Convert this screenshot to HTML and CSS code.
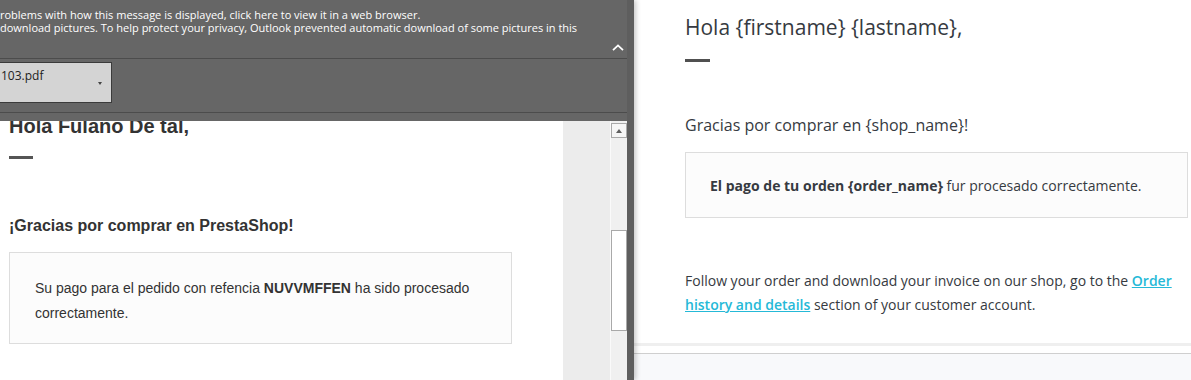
FILE: index.html
```html
<!DOCTYPE html>
<html lang="es">
<head>
    <meta charset="UTF-8">
    <meta name="viewport" content="width=device-width, initial-scale=1.0">
    <title>Email preview</title>
    <link rel="stylesheet" href="styles.css">
</head>

<body>
    <div class="outlook">
        <div class="infobar">
            <p>roblems with how this message is displayed, click here to view it in a web browser.</p>
            <p>download pictures. To help protect your privacy, Outlook prevented automatic download of some pictures in this</p>
            <div class="collapse">
                <svg width="12" height="7" viewBox="0 0 12 7">
                    <polyline points="1,6.2 6,1.4 11,6.2" fill="none" stroke="#fff" stroke-width="1.8" />
                </svg>
            </div>
        </div>

        <div class="attachments">
            <div class="attachment">
                <span>103.pdf</span>
                <span class="caret"></span>
            </div>
        </div>

        <div class="reading">
            <div class="email">
                <h1>Hola Fulano De tal,</h1>
                <div class="dash"></div>
                <h2>¡Gracias por comprar en PrestaShop!</h2>
                <div class="box">
                    Su pago para el pedido con refencia <b>NUVVMFFEN</b> ha sido procesado correctamente.
                </div>
            </div>
            <div class="gutter"></div>
            <div class="scrollbar">
                <div class="scroll-up"><span></span></div>
                <div class="thumb"></div>
            </div>
        </div>
    </div>

    <div class="preview">
        <div class="mail">
            <h1>Hola {firstname} {lastname},</h1>
            <div class="dash"></div>
            <h2>Gracias por comprar en {shop_name}!</h2>
            <div class="box">
                <b>El pago de tu orden {order_name}</b> fur procesado correctamente.
            </div>
            <p class="follow">
                Follow your order and download your invoice on our shop, go to the <a href="#">Order history and details</a> section of your customer account.
            </p>
        </div>
        <div class="separator"></div>
        <div class="below"></div>
    </div>
</body>

</html>
```

FILE: styles.css
```css
* {
    box-sizing: border-box;
}

body {
    margin: 0;
    height: 380px;
    display: flex;
    overflow: hidden;
    background: #fff;
}

/* left: outlook reading pane */

.outlook {
    position: relative;
    z-index: 1;
    width: 634px;
    flex-shrink: 0;
    display: flex;
    flex-direction: column;
    background: #666666;
    border-right: 7px solid #5e5e5e;
    box-shadow: 2px 0 5px rgba(0, 0, 0, 0.22);
}

.infobar {
    height: 59px;
    padding-top: 8px;
    border-bottom: 1px solid #4c4c4c;
    font-family: 'Open Sans', sans-serif;
    font-size: 11px;
    line-height: 13px;
    color: #fff;
    white-space: nowrap;
}

.infobar p {
    margin: 0;
}

.collapse {
    display: flex;
    justify-content: flex-end;
    padding-right: 3px;
    margin-top: 10px;
}

.collapse svg {
    display: block;
}

.attachments {
    height: 54px;
    padding-top: 3px;
    border-bottom: 1px solid #4c4c4c;
}

.attachment {
    display: flex;
    width: 113px;
    height: 41px;
    margin-left: -1px;
    padding: 5px 0 0 1px;
    background: #d4d4d4;
    border: 1px solid #3b3b3b;
    font-family: 'Open Sans', sans-serif;
    font-size: 12px;
    line-height: 16px;
    color: #222;
}

.caret {
    margin: 14px 9px 0 auto;
    width: 0;
    height: 0;
    border-left: 2.5px solid transparent;
    border-right: 2.5px solid transparent;
    border-top: 3px solid #444;
}

.reading {
    flex: 1;
    display: flex;
    padding-top: 8px;
    min-height: 0;
}

.email {
    width: 563px;
    background: #fff;
    overflow: hidden;
    padding-left: 9px;
    font-family: 'Liberation Sans', Arial, sans-serif;
    color: #333;
}

.email h1 {
    margin: -7px 0 0;
    font-size: 20px;
    line-height: 24px;
}

.email .dash {
    width: 24px;
    height: 3px;
    margin-top: 18px;
    background: #555;
}

.email h2 {
    margin: 57px 0 0;
    font-size: 16px;
    line-height: 20px;
}

.email .box {
    width: 503px;
    margin-top: 16px;
    padding: 23px 24px 17px 25px;
    background: #fcfcfc;
    border: 1px solid #dddddd;
    font-size: 14px;
    line-height: 25px;
}

.gutter {
    width: 47px;
    background: #ececec;
}

.scrollbar {
    width: 17px;
    background: #f0f0f0;
    border-left: 1px solid #fafafa;
}

.scroll-up {
    width: 16px;
    height: 15px;
    margin-top: 2px;
    display: flex;
    align-items: center;
    justify-content: center;
    background: #f6f6f6;
    border: 1px solid #a9a9a9;
}

.scroll-up span {
    width: 0;
    height: 0;
    border-left: 3.5px solid transparent;
    border-right: 3.5px solid transparent;
    border-bottom: 4px solid #606060;
}

.thumb {
    width: 16px;
    height: 101px;
    margin-top: 92px;
    background: #fff;
    border: 1px solid #a9a9a9;
}

/* right: template preview */

.preview {
    flex: 1;
    display: flex;
    flex-direction: column;
    font-family: 'Open Sans', sans-serif;
    color: #363a41;
}

.mail {
    padding: 13px 3px 0 51px;
}

.mail h1 {
    margin: 0;
    font-size: 21px;
    font-weight: normal;
    line-height: 28px;
}

.mail .dash {
    width: 25px;
    height: 3px;
    margin-top: 18px;
    background: #505050;
}

.mail h2 {
    margin: 52px 0 0;
    font-size: 16px;
    font-weight: normal;
    line-height: 22px;
}

.mail .box {
    margin-top: 16px;
    padding: 22px 24px 20px;
    background: #fcfcfc;
    border: 1px solid #dddddd;
    font-size: 14px;
    line-height: 22px;
}

.follow {
    margin: 51px 0 0;
    font-size: 14px;
    line-height: 24px;
}

.follow a {
    color: #25b9d7;
    font-weight: 600;
}

.separator {
    margin-top: 26px;
    height: 11px;
    border-top: 3px solid #efefef;
    border-bottom: 1px solid #cfcfcf;
}

.below {
    flex: 1;
    background: #f8f9fb;
}
```
